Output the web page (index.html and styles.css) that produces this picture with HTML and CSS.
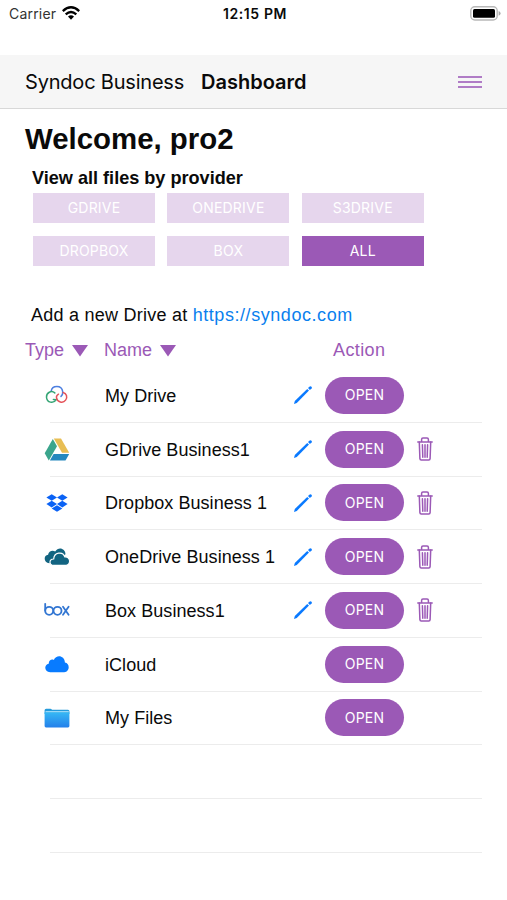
FILE: index.html
```html
<!DOCTYPE html>
<html lang="en">
<head>
    <meta charset="UTF-8">
    <meta name="viewport" content="width=device-width, initial-scale=1.0">
    <title>Syndoc Business - Dashboard</title>
    <link rel="stylesheet" href="styles.css">
</head>
<body>
    <svg class="defs" width="0" height="0">
        <symbol id="pencil" viewBox="0 0 20 20">
            <path d="M1 19L1.8 16.1 14.2 3.9 16 5.6 3.8 17.9Z" fill="#0a7aff"/>
            <path d="M15 3.1L16.7 1.5Q17.6.9 18.5 1.7 19.3 2.6 18.6 3.4L16.9 4.9Z" fill="#0a7aff"/>
        </symbol>
        <symbol id="trash" viewBox="0 0 16 24">
            <g fill="none" stroke="#9b59b6" stroke-width="1.5" stroke-linecap="round" stroke-linejoin="round">
                <path d="M.8 4.9H15.2M4.6 4.5V2.4Q4.6 1 6 1H10Q11.4 1 11.4 2.4V4.5"/>
                <path d="M2.3 5L2.9 21.6Q3 23 4.2 23H11.8Q13 23 13.1 21.6L13.7 5"/>
                <path d="M5.4 7.8L5.8 20.3M8 7.8V20.3M10.6 7.8L10.2 20.3"/>
            </g>
        </symbol>
    </svg>

    <div class="status-bar">
        <div class="carrier">
            <span>Carrier</span>
            <svg width="18" height="14" viewBox="0 0 18 14">
                <g fill="none" stroke="#000" stroke-width="2.3">
                    <path d="M.8 5.1Q9-2.5 17.2 5.1"/>
                    <path d="M3.7 8.4Q9 3.5 14.3 8.4"/>
                </g>
                <path d="M6 10.6Q9 8 12 10.6L9 13.8Z"/>
            </svg>
        </div>
        <div class="clock">12:15 PM</div>
        <svg class="battery" width="31" height="15" viewBox="0 0 31 15">
            <rect x=".8" y=".8" width="26.4" height="13.2" rx="4" fill="#fff" stroke="#b8b8b8" stroke-width="1.4"/>
            <rect x="3" y="3" width="22" height="8.8" rx="1.5"/>
            <path d="M28.6 5Q30.6 6 30.6 7.4T28.6 9.8Z" fill="#aaa"/>
        </svg>
    </div>

    <header class="navbar">
        <span class="brand">Syndoc Business</span>
        <span class="page-title">Dashboard</span>
        <div class="menu"><i></i><i></i><i></i></div>
    </header>

    <main>
        <h1>Welcome, pro2</h1>
        <h2>View all files by provider</h2>
        <div class="providers">
            <button>GDRIVE</button>
            <button>ONEDRIVE</button>
            <button>S3DRIVE</button>
            <button>DROPBOX</button>
            <button>BOX</button>
            <button class="active">ALL</button>
        </div>

        <p class="add-drive">Add a new Drive at <a href="#">https://syndoc.com</a></p>

        <div class="columns">
            <span class="col-type">Type <svg width="18" height="13" viewBox="0 0 18 13"><path d="M1 1H17L9 12.5Z"/></svg></span>
            <span class="col-name">Name <svg width="18" height="13" viewBox="0 0 18 13"><path d="M1 1H17L9 12.5Z"/></svg></span>
            <span class="col-action">Action</span>
        </div>

        <ul class="drives">
            <li>
                <svg class="icon" viewBox="0 0 26 26">
                    <g fill="none" stroke-width="1.5" stroke-linecap="round">
                        <path d="M7.2 9.2C8 3.2 17.7 2.7 18.7 9.6Q19 12.7 17 14.4" stroke="#4d7fe0"/>
                        <path d="M10.8 10.9C7.4 7.9 2.3 10.7 2.5 15.2C2.8 20.7 9.5 22 12.3 17.7M12.3 17.7L9.4 17.5" stroke="#35a575"/>
                        <path d="M19.1 10.4C22.6 11.2 23.8 15.3 21.6 18.1C18.8 21.9 13.3 20 12.5 15.8Q12.1 13.6 14.5 12.2" stroke="#e5535a"/>
                    </g>
                </svg>
                <span class="name">My Drive</span>
                <svg class="pencil"><use href="#pencil"/></svg>
                <button class="open">OPEN</button>
            </li>
            <li>
                <svg class="icon" viewBox="0 0 26 26">
                    <path d="M8.8 3L.7 17.3 4.8 24.5 13 10.3Z" fill="#3ba58c"/>
                    <path d="M9.8 2.4H17L25.2 16.7H18Z" fill="#e8be54"/>
                    <path d="M9.6 18.1H25.2L21.5 24.5H5.9Z" fill="#2588be"/>
                </svg>
                <span class="name">GDrive Business1</span>
                <svg class="pencil"><use href="#pencil"/></svg>
                <button class="open">OPEN</button>
                <svg class="trash"><use href="#trash"/></svg>
            </li>
            <li>
                <svg class="icon" viewBox="0 0 26 26">
                    <g fill="#0a62f5">
                        <path d="M7.7 4.2L13 7.5 7.7 10.8 2.4 7.5Z"/>
                        <path d="M18.3 4.2L23.6 7.5 18.3 10.8 13 7.5Z"/>
                        <path d="M7.7 10.8L13 14.1 7.7 17.4 2.4 14.1Z"/>
                        <path d="M18.3 10.8L23.6 14.1 18.3 17.4 13 14.1Z"/>
                        <path d="M13 15.2L18.3 18.5 13 21.8 7.7 18.5Z"/>
                    </g>
                </svg>
                <span class="name">Dropbox Business 1</span>
                <svg class="pencil"><use href="#pencil"/></svg>
                <button class="open">OPEN</button>
                <svg class="trash"><use href="#trash"/></svg>
            </li>
            <li>
                <svg class="icon" viewBox="0 0 26 26">
                    <path d="M5.3 19.2C-.2 19-1 11.5 4.1 10.8C4.6 7.1 8.7 5.8 11.2 7.6C14.4 2.1 21.4 4.5 21.5 10.2L11.5 17.5Z" fill="#126481"/>
                    <path d="M9.7 21.4C4.5 21.3 5 14.9 9.7 15C10 8.2 18.8 6.9 20.8 12.9C26.2 11.9 27.5 20.7 22.2 21.4Z" fill="#126481" stroke="#fff" stroke-width="1.2"/>
                </svg>
                <span class="name">OneDrive Business 1</span>
                <svg class="pencil"><use href="#pencil"/></svg>
                <button class="open">OPEN</button>
                <svg class="trash"><use href="#trash"/></svg>
            </li>
            <li>
                <svg class="icon" viewBox="0 0 26 26">
                    <g fill="none" stroke="#3276d2" stroke-width="1.8" stroke-linecap="round">
                        <path d="M1.2 6.8V13.5"/>
                        <circle cx="5.2" cy="13.8" r="4"/>
                        <circle cx="13.5" cy="13.8" r="4"/>
                        <path d="M19 9.8L24.6 17.8M24.6 9.8L19 17.8"/>
                    </g>
                </svg>
                <span class="name">Box Business1</span>
                <svg class="pencil"><use href="#pencil"/></svg>
                <button class="open">OPEN</button>
                <svg class="trash"><use href="#trash"/></svg>
            </li>
            <li>
                <svg class="icon" viewBox="0 0 26 26">
                    <path d="M6.2 21.2C-.1 21.1-.1 13.6 4.7 12.8C4.8 8.9 7.7 8 9.8 8.9C12.5 3.1 20.6 4.5 20.9 11.6C26.3 12.4 25.8 21.1 20.2 21.2Z" fill="#087bff"/>
                </svg>
                <span class="name">iCloud</span>
                <button class="open">OPEN</button>
            </li>
            <li>
                <svg class="icon" viewBox="0 0 26 26">
                    <defs>
                        <linearGradient id="folder" x2="0" y2="1">
                            <stop stop-color="#36b8f5"/>
                            <stop offset="1" stop-color="#2480ea"/>
                        </linearGradient>
                    </defs>
                    <path d="M.6 8V5.2Q.6 3.7 2.1 3.7H6.3Q7.4 3.7 8 4.8H24Q25.4 4.8 25.4 6.3V9H.6Z" fill="#249bdc"/>
                    <path d="M.6 7.3H25.4V21Q25.4 22.4 24 22.4H2Q.6 22.4.6 21Z" fill="url(#folder)"/>
                    <path d="M1.5 6.7H24.8" stroke="#c8efff" stroke-width=".9"/>
                </svg>
                <span class="name">My Files</span>
                <button class="open">OPEN</button>
            </li>
            <li></li>
            <li></li>
        </ul>
    </main>
</body>
</html>
```
FILE: styles.css
```css
* {
    box-sizing: border-box;
}

body {
    margin: 0;
    background: #fff;
    color: #0a0a0a;
    font-family: "Liberation Sans", Arial, sans-serif;
}

svg {
    display: block;
    flex: none;
}

.defs {
    display: none;
}

button {
    padding: 0 0 1px;
    border: none;
    color: #fff;
    font-family: Inter, sans-serif;
    font-size: 14px;
    letter-spacing: 0.2px;
}

.status-bar {
    display: grid;
    grid-template-columns: 1fr auto 1fr;
    height: 55px;
    padding: 6px 6px 0 9px;
    font-family: Inter, sans-serif;
    font-size: 14px;
    line-height: 16px;
}

.carrier {
    display: flex;
    gap: 6px;
    color: #333;
    letter-spacing: 0.2px;
}

.clock {
    font-weight: 600;
    letter-spacing: 0.6px;
}

.battery {
    justify-self: end;
}

.navbar {
    display: flex;
    align-items: center;
    height: 54px;
    padding: 0 25px;
    background: #f6f6f6;
    border-bottom: 1px solid #d8d8d8;
    font-family: Inter, sans-serif;
    font-size: 20px;
    letter-spacing: -0.2px;
}

.page-title {
    margin-left: 17px;
    font-weight: 600;
    letter-spacing: 0;
}

.menu {
    display: flex;
    flex-direction: column;
    gap: 3px;
    width: 24px;
    margin-left: auto;
}

.menu i {
    height: 2px;
    background: #b07cc6;
}

h1 {
    margin: 13px 0 0 25px;
    font-size: 29.4px;
    line-height: 34px;
}

h2 {
    margin: 11px 0 0 32px;
    font-size: 18.1px;
    line-height: 22px;
}

.providers {
    display: grid;
    grid-template-columns: repeat(3, 122px);
    grid-auto-rows: 30px;
    gap: 13px 12.4px;
    margin: 4px 0 0 33px;
}

.providers button {
    background: #e6d6ed;
}

.providers .active {
    background: #9b59b6;
}

.add-drive {
    margin: 38px 0 0 31px;
    font-size: 18px;
    line-height: 22px;
    letter-spacing: 0.24px;
}

.add-drive a {
    color: #0a7fee;
    text-decoration: none;
    letter-spacing: 0.56px;
}

.columns {
    display: grid;
    grid-template-columns: 79px 229px auto;
    margin: 13px 0 0 25px;
    color: #9b59b6;
    font-size: 18px;
    line-height: 22px;
}

.columns span {
    display: flex;
    align-items: center;
    gap: 7px;
}

.columns .col-action {
    letter-spacing: 0.4px;
}

.columns svg {
    fill: #9b59b6;
}

.drives {
    margin: 8px 25px 0 50px;
    padding: 0;
    list-style: none;
}

.drives li {
    display: flex;
    align-items: center;
    height: 53.75px;
    border-bottom: 1px solid #ececec;
}

.icon {
    width: 26px;
    height: 26px;
    margin-left: -6px;
}

.name {
    width: 188px;
    margin-left: 35px;
    padding-top: 2px;
    font-size: 18px;
    letter-spacing: 0.05px;
}

.pencil {
    width: 20px;
    height: 20px;
}

.open {
    width: 79px;
    height: 37px;
    margin-left: auto;
    margin-right: 78px;
    border-radius: 19px;
    background: #9b59b6;
}

.trash {
    width: 16px;
    height: 24px;
    margin-left: -65px;
    margin-right: 49px;
}
```
